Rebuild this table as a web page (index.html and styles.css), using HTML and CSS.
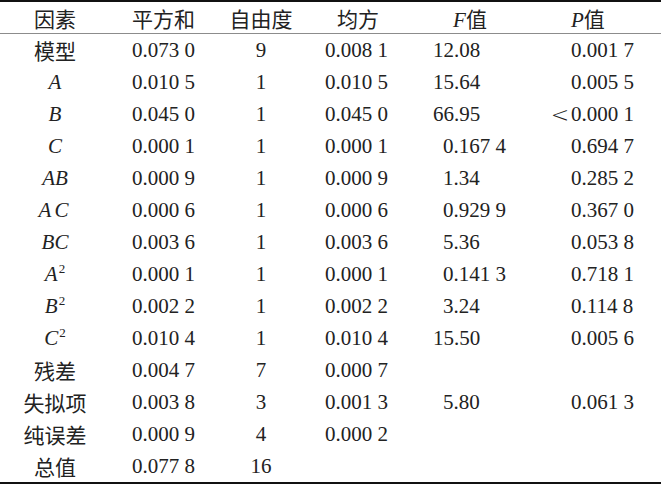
FILE: index.html
```html
<!DOCTYPE html>
<html lang="zh">
<head>
<meta charset="utf-8">
<title>方差分析</title>
<link rel="stylesheet" href="styles.css">
</head>
<body>
<div class="table">
  <div class="row head">
    <div class="c1">因素</div>
    <div class="c2">平方和</div>
    <div class="c3">自由度</div>
    <div class="c4h">均方</div>
    <div class="c5h"><i>F</i>值</div>
    <div class="c6"><i>P</i>值</div>
  </div>
  <div class="row first">
    <div class="c1">模型</div><div class="c2">0.073 0</div><div class="c3">9</div><div class="c4">0.008 1</div><div class="c5">12.08</div><div class="c6">0.001 7</div>
  </div>
  <div class="row">
    <div class="c1"><i>A</i></div><div class="c2">0.010 5</div><div class="c3">1</div><div class="c4">0.010 5</div><div class="c5">15.64</div><div class="c6">0.005 5</div>
  </div>
  <div class="row">
    <div class="c1"><i>B</i></div><div class="c2">0.045 0</div><div class="c3">1</div><div class="c4">0.045 0</div><div class="c5">66.95</div><div class="c6"><span class="lt">&lt;</span>0.000 1</div>
  </div>
  <div class="row">
    <div class="c1"><i>C</i></div><div class="c2">0.000 1</div><div class="c3">1</div><div class="c4">0.000 1</div><div class="c5 one">0.167 4</div><div class="c6">0.694 7</div>
  </div>
  <div class="row">
    <div class="c1"><i>AB</i></div><div class="c2">0.000 9</div><div class="c3">1</div><div class="c4">0.000 9</div><div class="c5 one">1.34</div><div class="c6">0.285 2</div>
  </div>
  <div class="row">
    <div class="c1"><i class="wide">AC</i></div><div class="c2">0.000 6</div><div class="c3">1</div><div class="c4">0.000 6</div><div class="c5 one">0.929 9</div><div class="c6">0.367 0</div>
  </div>
  <div class="row">
    <div class="c1"><i>BC</i></div><div class="c2">0.003 6</div><div class="c3">1</div><div class="c4">0.003 6</div><div class="c5 one">5.36</div><div class="c6">0.053 8</div>
  </div>
  <div class="row">
    <div class="c1"><i>A</i><sup>2</sup></div><div class="c2">0.000 1</div><div class="c3">1</div><div class="c4">0.000 1</div><div class="c5 one">0.141 3</div><div class="c6">0.718 1</div>
  </div>
  <div class="row">
    <div class="c1"><i>B</i><sup>2</sup></div><div class="c2">0.002 2</div><div class="c3">1</div><div class="c4">0.002 2</div><div class="c5 one">3.24</div><div class="c6">0.114 8</div>
  </div>
  <div class="row">
    <div class="c1"><i>C</i><sup>2</sup></div><div class="c2">0.010 4</div><div class="c3">1</div><div class="c4">0.010 4</div><div class="c5">15.50</div><div class="c6">0.005 6</div>
  </div>
  <div class="row">
    <div class="c1">残差</div><div class="c2">0.004 7</div><div class="c3">7</div><div class="c4">0.000 7</div><div class="c5"></div><div class="c6"></div>
  </div>
  <div class="row">
    <div class="c1">失拟项</div><div class="c2">0.003 8</div><div class="c3">3</div><div class="c4">0.001 3</div><div class="c5 one">5.80</div><div class="c6">0.061 3</div>
  </div>
  <div class="row">
    <div class="c1">纯误差</div><div class="c2">0.000 9</div><div class="c3">4</div><div class="c4">0.000 2</div><div class="c5"></div><div class="c6"></div>
  </div>
  <div class="row last">
    <div class="c1">总值</div><div class="c2">0.077 8</div><div class="c3">16</div><div class="c4"></div><div class="c5"></div><div class="c6"></div>
  </div>
</div>
</body>
</html>
```
FILE: styles.css
```css
html, body {
  margin: 0;
  padding: 0;
  background: #ffffff;
}

.table {
  width: 661px;
  border-top: 2.5px solid #111111;
  font-family: "Liberation Serif", "Noto Sans CJK SC", serif;
  font-size: 21px;
  color: #222222;
}

.row {
  display: grid;
  grid-template-columns: 110px 106px 90px 104px 120px 131px;
  align-items: center;
  height: 32px;
  white-space: nowrap;
}

.row.head {
  height: 31px;
  border-bottom: 1.5px solid #8c8c8c;
}

.row.last {
  border-bottom: 3px solid #111111;
}

.c1 { text-align: center; }
.c2 { padding-left: 22px; }
.c3 { text-align: center; }
.c4 { padding-left: 19px; }
.c4h { text-align: center; }
.c5 { padding-left: 23px; }
.c5.one { padding-left: 33px; }
.c5h { text-align: center; }
.c6 { padding-left: 41px; }

i {
  font-style: italic;
}

i.wide {
  letter-spacing: 3px;
}

sup {
  font-size: 13px;
  vertical-align: 8px;
  line-height: 0;
  margin-left: 1px;
}

.lt {
  display: inline-block;
  width: 22px;
  margin-left: -22px;
  text-align: center;
  font-family: "DejaVu Sans", sans-serif;
  font-size: 22px;
  font-weight: 300;
  line-height: 1;
  vertical-align: -1px;
}
```
